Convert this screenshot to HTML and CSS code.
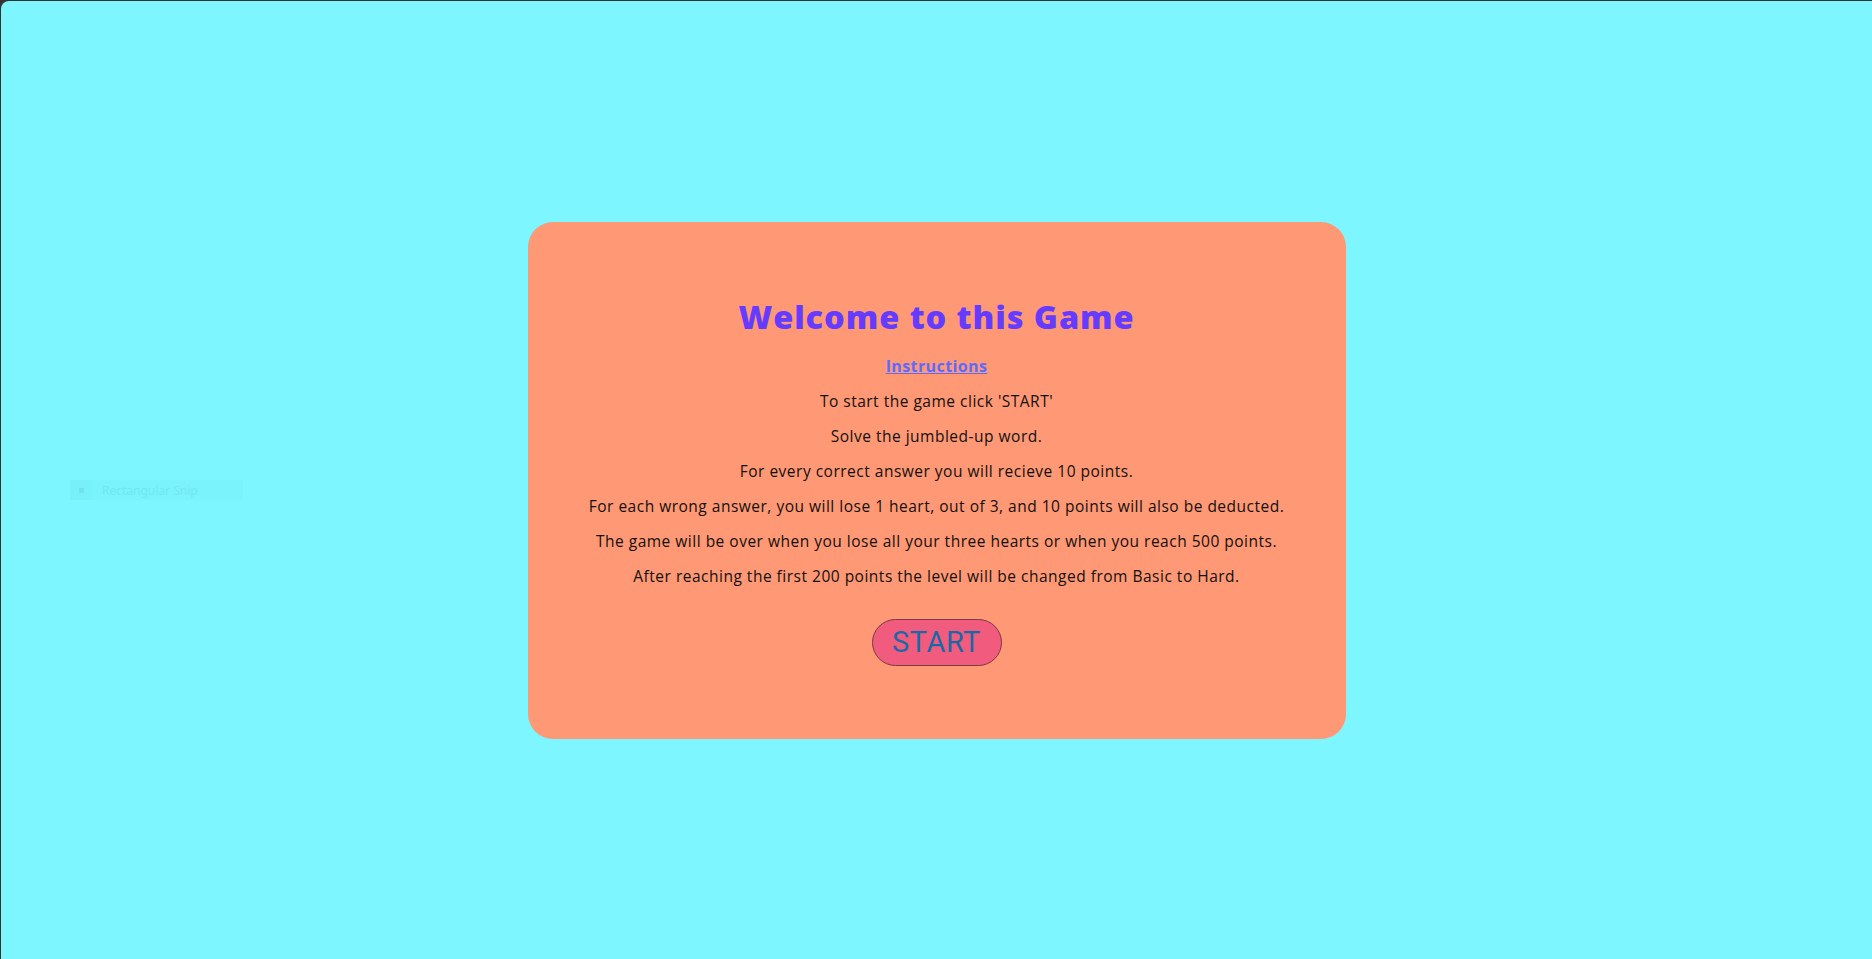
FILE: index.html
```html
<!DOCTYPE html>
<html lang="en">
<head>
<meta charset="utf-8">
<title>Word Game</title>
<link rel="stylesheet" href="styles.css">
</head>
<body>
<div class="window">
  <div class="snip"><span class="snip-icon"><span class="snip-dot"></span></span><span class="snip-text">Rectangular Snip</span></div>
  <main class="card">
    <h1 class="title">Welcome to this Game</h1>
    <h2 class="instr"><a href="#">Instructions</a></h2>
    <p>To start the game click 'START'</p>
    <p>Solve the jumbled-up word.</p>
    <p>For every correct answer you will recieve 10 points.</p>
    <p>For each wrong answer, you will lose 1 heart, out of 3, and 10 points will also be deducted.</p>
    <p>The game will be over when you lose all your three hearts or when you reach 500 points.</p>
    <p>After reaching the first 200 points the level will be changed from Basic to Hard.</p>
    <button class="start">START</button>
  </main>
</div>
</body>
</html>
```
FILE: styles.css
```css
html, body {
  margin: 0;
  height: 100%;
}
body {
  background: #333333;
  font-family: "Open Sans", "Noto Sans", sans-serif;
}
.window {
  position: relative;
  box-sizing: border-box;
  margin: 1px 0 0 1px;
  height: calc(100% - 1px);
  background: #7df6ff;
  border-top-left-radius: 8px;
  display: flex;
  align-items: center;
  justify-content: center;
}
.card {
  width: 818px;
  height: 517px;
  box-sizing: border-box;
  background: #ff9874;
  border-radius: 25px;
  padding-top: 74px;
  display: flex;
  flex-direction: column;
  align-items: center;
  text-align: center;
}
.title {
  margin: 0;
  font-family: "Open Sans", sans-serif;
  font-weight: 800;
  font-size: 32.5px;
  line-height: 42px;
  color: #653cff;
  letter-spacing: 0.95px;
}
.instr {
  margin: 17px 0 0;
  font-size: 16px;
  line-height: 22px;
  font-weight: 700;
  letter-spacing: 0.4px;
}
.instr a {
  color: #5b6bff;
  text-decoration: underline;
}
.card p {
  margin: 13px 0 0;
  font-size: 15.5px;
  line-height: 22px;
  letter-spacing: 0.5px;
  color: #111111;
}
.start {
  margin-top: 32px;
  width: 130px;
  height: 47px;
  box-sizing: border-box;
  border: 1.5px solid #7a3a44;
  border-radius: 24px;
  background: #f05b7e;
  color: #1b68a6;
  font-family: Roboto, "Liberation Sans", sans-serif;
  font-size: 29px;
  letter-spacing: 0.5px;
  line-height: 1;
  padding: 0;
}
.snip {
  position: absolute;
  left: 69px;
  top: 479px;
  width: 173px;
  height: 20px;
  display: flex;
  align-items: center;
  gap: 10px;
  background: #7bf3fc;
  opacity: 0.9;
}
.snip-icon {
  width: 22px;
  height: 20px;
  background: #78f0fa;
  display: flex;
  align-items: center;
  justify-content: center;
}
.snip-dot {
  width: 5px;
  height: 5px;
  background: #6fe0ea;
}
.snip-text {
  font-family: "Noto Sans", sans-serif;
  font-size: 12px;
  color: #6fe6f2;
}
```
